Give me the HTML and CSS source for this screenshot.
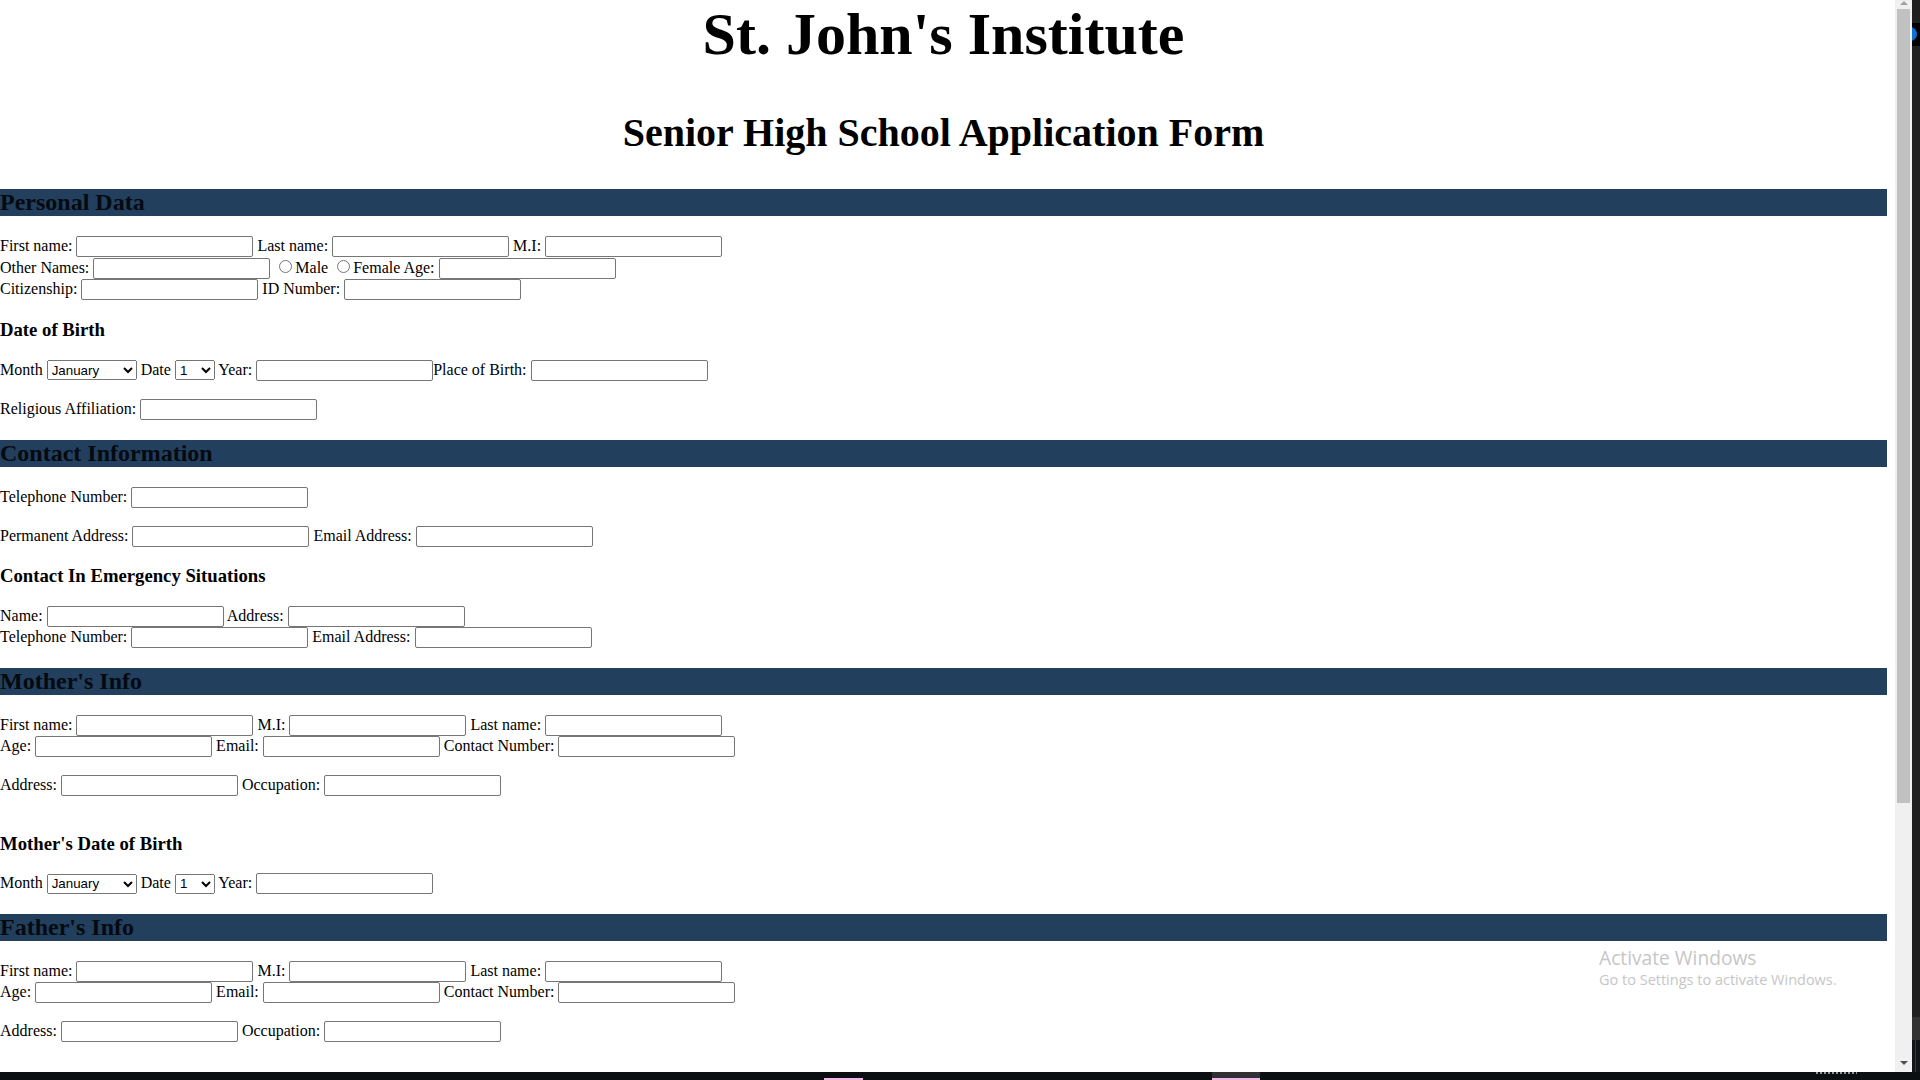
FILE: index.html
```html
<!DOCTYPE html>
<html lang="en">
<head>
<meta charset="utf-8">
<title>St. John's Institute - Application Form</title>
<link rel="stylesheet" href="styles.css">
</head>
<body>
<div class="screen">
  <div class="viewport">
    <main class="page">
      <h1 class="title">St. John's Institute</h1>
      <h2 class="subtitle">Senior High School Application Form</h2>

      <h2 class="section">Personal Data</h2>
      <div class="fields">
        First name: <input type="text" class="txt"> Last name: <input type="text" class="txt"> M.I: <input type="text" class="txt"><br>
        Other Names: <input type="text" class="txt"> <input type="radio" name="sex" class="rad">Male <input type="radio" name="sex" class="rad">Female Age: <input type="text" class="txt"><br>
        Citizenship: <input type="text" class="txt"> ID Number: <input type="text" class="txt">
      </div>
      <h3 class="sub">Date of Birth</h3>
      <div class="fields">
        Month <select class="sel sel-month"><option>January</option><option>February</option><option>September</option></select> Date <select class="sel sel-date"><option>1</option><option>2</option></select> Year: <input type="text" class="txt">Place of Birth: <input type="text" class="txt"><br><br>
        Religious Affiliation: <input type="text" class="txt">
      </div>

      <h2 class="section">Contact Information</h2>
      <div class="fields">
        Telephone Number: <input type="text" class="txt"><br><br>
        Permanent Address: <input type="text" class="txt"> Email Address: <input type="text" class="txt">
      </div>
      <h3 class="sub">Contact In Emergency Situations</h3>
      <div class="fields">
        Name: <input type="text" class="txt"> Address: <input type="text" class="txt"><br>
        Telephone Number: <input type="text" class="txt"> Email Address: <input type="text" class="txt">
      </div>

      <h2 class="section">Mother's Info</h2>
      <div class="fields">
        First name: <input type="text" class="txt"> M.I: <input type="text" class="txt"> Last name: <input type="text" class="txt"><br>
        Age: <input type="text" class="txt"> Email: <input type="text" class="txt"> Contact Number: <input type="text" class="txt"><br><br>
        Address: <input type="text" class="txt"> Occupation: <input type="text" class="txt"><br><br>
      </div>
      <h3 class="sub">Mother's Date of Birth</h3>
      <div class="fields">
        Month <select class="sel sel-month"><option>January</option><option>February</option><option>September</option></select> Date <select class="sel sel-date"><option>1</option><option>2</option></select> Year: <input type="text" class="txt">
      </div>

      <h2 class="section">Father's Info</h2>
      <div class="fields">
        First name: <input type="text" class="txt"> M.I: <input type="text" class="txt"> Last name: <input type="text" class="txt"><br>
        Age: <input type="text" class="txt"> Email: <input type="text" class="txt"> Contact Number: <input type="text" class="txt"><br><br>
        Address: <input type="text" class="txt"> Occupation: <input type="text" class="txt">
      </div>
    </main>

    <div class="scrollbar">
      <div class="sb-up"><span class="tri-up"></span></div>
      <div class="sb-thumb"></div>
      <div class="sb-track"></div>
      <div class="sb-down"><span class="tri-down"></span></div>
    </div>

    <div class="edge">
      <div class="edge-top"></div>
      <div class="edge-app"><span class="edge-dot"></span></div>
      <div class="edge-mid"></div>
      <div class="edge-light"></div>
      <div class="edge-bottom"></div>
    </div>
  </div>

  <div class="taskbar">
    <div class="tb-spacer tb-s1"></div>
    <div class="tb-item tb-pink"></div>
    <div class="tb-spacer tb-s2"></div>
    <div class="tb-item tb-gray"></div>
    <div class="tb-spacer tb-s3"></div>
    <div class="tb-clock"></div>
  </div>

  <div class="watermark">
    <div class="wm-title">Activate Windows</div>
    <div class="wm-sub">Go to Settings to activate Windows.</div>
  </div>
</div>
</body>
</html>
```

FILE: styles.css
```css
html, body {
  margin: 0;
  padding: 0;
  background: #ffffff;
}

body {
  width: 1920px;
  height: 1080px;
  overflow: hidden;
}

.screen {
  position: relative;
  width: 1920px;
  height: 1080px;
  display: flex;
  flex-direction: column;
  overflow: hidden;
}

.viewport {
  display: flex;
  height: 1072px;
  flex: none;
}

.page {
  width: 1895px;
  padding-right: 8px;
  box-sizing: border-box;
  height: 1072px;
  overflow: hidden;
  background: #ffffff;
  color: #000000;
  font-family: "Liberation Serif", "Times New Roman", serif;
  font-size: 16px;
}

.title {
  font-size: 60px;
  font-weight: bold;
  text-align: center;
  margin: 0 0 0.67em;
}

.subtitle {
  font-size: 40px;
  font-weight: bold;
  text-align: center;
  margin: 0.83em 0;
}

.section {
  font-size: 24px;
  font-weight: bold;
  margin: 0.83em 0;
  background: #223f5e;
  color: #050a10;
}

.sub {
  font-size: 18.72px;
  font-weight: bold;
  margin: 1em 0;
}

.fields {
  margin: 0;
}

.txt {
  box-sizing: border-box;
  width: 177px;
  height: 21px;
  padding: 1px 2px;
  border: 1px solid #767676;
  border-radius: 2px;
  background: #ffffff;
  font-family: "Liberation Sans", Arial, sans-serif;
  font-size: 13.333px;
  margin: 0;
}

.rad {
  margin: 3px 3px 0 5px;
  width: 13px;
  height: 13px;
}

.sel {
  box-sizing: border-box;
  height: 20px;
  font-family: "Liberation Sans", Arial, sans-serif;
  font-size: 13.333px;
  margin: 0;
}

.sel-month {
  width: 90px;
}

.sel-date {
  width: 40px;
}

/* fake window scrollbar */
.scrollbar {
  width: 17px;
  flex: none;
  background: #f0f0f0;
  display: flex;
  flex-direction: column;
  align-items: center;
}

.sb-up {
  height: 9px;
  width: 100%;
  display: flex;
  justify-content: center;
  align-items: flex-start;
}

.tri-up {
  width: 0;
  height: 0;
  border-left: 4px solid transparent;
  border-right: 4px solid transparent;
  border-bottom: 4px solid #a3a3a3;
  margin-top: 1px;
}

.sb-thumb {
  width: 13px;
  height: 794px;
  background: #c1c1c1;
}

.sb-track {
  flex: 1;
}

.sb-down {
  height: 17px;
  width: 100%;
  display: flex;
  justify-content: center;
  align-items: center;
}

.tri-down {
  width: 0;
  height: 0;
  border-left: 4px solid transparent;
  border-right: 4px solid transparent;
  border-top: 4px solid #505050;
  margin-top: -1px;
}

/* dark edge of the neighbouring window */
.edge {
  width: 8px;
  flex: none;
  display: flex;
  flex-direction: column;
  background: #202020;
}

.edge-top {
  height: 23px;
  background: #1f1f1f;
}

.edge-app {
  height: 23px;
  background: #000000;
  position: relative;
  overflow: hidden;
}

.edge-dot {
  position: absolute;
  left: -9px;
  top: 4px;
  width: 14px;
  height: 14px;
  border-radius: 50%;
  background: #0a74d4;
}

.edge-mid {
  flex: 1;
  background: #202020;
}

.edge-light {
  height: 23px;
  background: #333333;
}

.edge-bottom {
  height: 32px;
  background: #111418;
  box-shadow: inset 3px 0 0 #111418, inset 4px 0 0 #3a3a3a;
}

/* taskbar strip */
.taskbar {
  height: 8px;
  flex: none;
  display: flex;
  background: #0b0f12;
}

.tb-s1 {
  width: 824px;
}

.tb-item {
  width: 39px;
}

.tb-pink {
  box-shadow: inset 0 -2px 0 #f3b5e6;
}

.tb-s2 {
  width: 349px;
}

.tb-gray {
  width: 48px;
  background: #2e3033;
  box-shadow: inset 0 -2px 0 #f3b5e6;
}

.tb-s3 {
  width: 556px;
}

.tb-clock {
  width: 41px;
  height: 2px;
  background: repeating-linear-gradient(90deg, #d0d0d0 0 2px, transparent 2px 4px);
  opacity: 0.7;
}

/* activation watermark */
.watermark {
  position: absolute;
  left: 1599px;
  top: 946px;
  color: #c6c6c6;
  font-family: "Open Sans", "Noto Sans", sans-serif;
  pointer-events: none;
}

.wm-title {
  font-size: 19.2px;
  line-height: 24px;
}

.wm-sub {
  font-size: 14.5px;
  line-height: 20px;
}
```
